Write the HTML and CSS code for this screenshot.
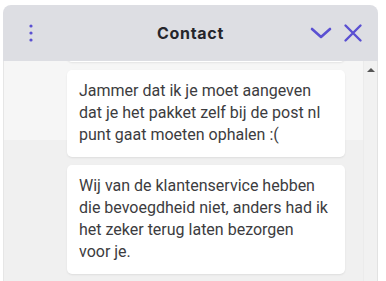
FILE: index.html
```html
<!DOCTYPE html>
<html lang="nl">
<head>
<meta charset="utf-8">
<link rel="stylesheet" href="styles.css">
</head>
<body>
<div class="widget">
  <header class="head">
    <button class="icon-btn menu" aria-label="Menu">
      <svg width="6" height="20" viewBox="0 0 6 20"><circle cx="3" cy="3" r="1.6"/><circle cx="3" cy="10" r="1.6"/><circle cx="3" cy="17" r="1.6"/></svg>
    </button>
    <h1 class="title">Contact</h1>
    <div class="actions">
      <button class="icon-btn" aria-label="Minimaliseren">
        <svg width="22" height="14" viewBox="0 0 22 14"><path d="M2 3 L11 11 L20 3" fill="none" stroke-width="2.6" stroke-linecap="round" stroke-linejoin="round"/></svg>
      </button>
      <button class="icon-btn" aria-label="Sluiten">
        <svg width="20" height="20" viewBox="0 0 20 20"><path d="M2.5 2.5 L17.5 17.5 M17.5 2.5 L2.5 17.5" fill="none" stroke-width="2.4" stroke-linecap="round"/></svg>
      </button>
    </div>
  </header>
  <div class="body">
    <div class="messages">
      <div class="bubble cut"></div>
      <div class="bubble">Jammer dat ik je moet aangeven dat je het pakket zelf bij de post nl punt gaat moeten ophalen :(</div>
      <div class="bubble">Wij van de klantenservice hebben die bevoegdheid niet, anders had ik het zeker terug laten bezorgen<br>voor je.</div>
    </div>
    <div class="scrollbar"><span class="arrow"></span></div>
  </div>
</div>
</body>
</html>
```

FILE: styles.css
```css
* { box-sizing: border-box; }
html, body { margin: 0; padding: 0; background: #ffffff; }
body { font-family: Inter, "Noto Sans", sans-serif; overflow: hidden; height: 281px; }

.widget {
  margin: 5px 0 0 3px;
  width: 375px;
  height: 276px;
  display: flex;
  flex-direction: column;
  border-radius: 8px 8px 0 0;
  overflow: hidden;
}

.head {
  height: 56px;
  flex: none;
  background: #dddee3;
  display: grid;
  grid-template-columns: 80px 1fr 80px;
  align-items: center;
}

.icon-btn {
  border: 0;
  background: none;
  padding: 0;
  display: flex;
  align-items: center;
  justify-content: center;
  cursor: pointer;
}
.icon-btn svg { display: block; }
.icon-btn circle { fill: #5a50d2; }
.icon-btn path { stroke: #5a50d2; }

.menu { justify-self: start; margin-left: 25px; }

.title {
  margin: 0;
  text-align: center;
  font-size: 16px;
  font-weight: 700;
  color: #25252b;
  letter-spacing: 0.7px;
}

.actions {
  display: flex;
  align-items: center;
  gap: 11px;
  justify-self: end;
  margin-right: 15px;
}

.body {
  flex: 1;
  display: flex;
  overflow: hidden;
  background: linear-gradient(#f6f6f6 0 79px, #f0f0f0 79px);
  border-left: 1px solid #e6e6e6;
}

.messages {
  flex: 1;
  padding-left: 63px;
  padding-right: 18px;
  display: flex;
  flex-direction: column;
  gap: 8px;
  margin-top: -10px;
}

.bubble {
  background: #ffffff;
  border-radius: 5px;
  box-shadow: 0 1px 2px rgba(0,0,0,0.08);
  padding: 10px 10px 11px 12px;
  font-family: Roboto, "Noto Sans", sans-serif;
  font-size: 16px;
  line-height: 22px;
  color: #3c3c40;
}
.bubble.cut { height: 11px; padding: 0; flex: none; }

.scrollbar {
  width: 15px;
  flex: none;
  background: #f1f1f1;
  border-left: 1px solid #ebebeb;
  border-right: 1px solid #e2e2e2;
  display: flex;
  justify-content: center;
  padding-top: 7px;
}
.arrow {
  width: 0;
  height: 0;
  border-left: 4px solid transparent;
  border-right: 4px solid transparent;
  border-bottom: 4px solid #555;
}
```
